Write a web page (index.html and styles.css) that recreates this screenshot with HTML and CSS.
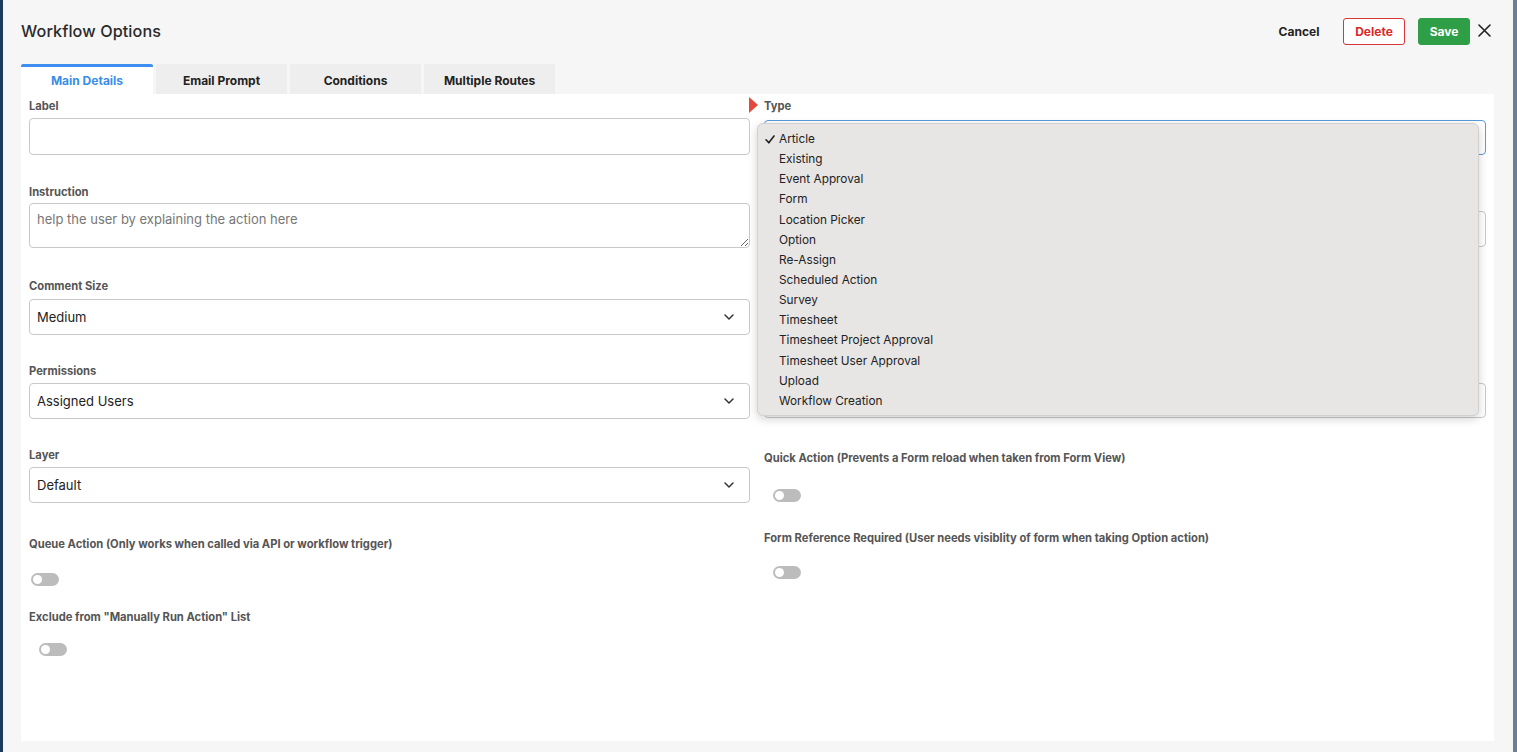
FILE: index.html
```html
<!DOCTYPE html>
<html lang="en">
<head>
<meta charset="utf-8">
<title>Workflow Options</title>
<link rel="stylesheet" href="styles.css">
</head>
<body>
<div class="screen">
  <div class="edge edge-left"></div>
  <div class="modal">
    <header class="modal-head">
      <h1 class="title">Workflow Options</h1>
      <div class="actions">
        <button class="btn btn-cancel">Cancel</button>
        <button class="btn btn-delete">Delete</button>
        <button class="btn btn-save">Save</button>
        <button class="btn-close" aria-label="Close">
          <svg width="13" height="13" viewBox="0 0 13 13"><path d="M1 1L12 12M12 1L1 12" stroke="#222" stroke-width="1.6" stroke-linecap="round"/></svg>
        </button>
      </div>
    </header>
    <nav class="tabs">
      <div class="tab tab-active">Main Details</div>
      <div class="tab">Email Prompt</div>
      <div class="tab">Conditions</div>
      <div class="tab">Multiple Routes</div>
    </nav>
    <section class="panel">
      <div class="col col-left">
        <div class="field f-label">
          <label class="lbl">Label</label>
          <div class="input"></div>
        </div>
        <div class="field f-instruction">
          <label class="lbl">Instruction</label>
          <textarea class="textarea" placeholder="help the user by explaining the action here"></textarea>
        </div>
        <div class="field f-comment">
          <label class="lbl">Comment Size</label>
          <div class="select"><span>Medium</span><svg class="chev" width="10" height="6" viewBox="0 0 10 6"><path d="M1 1L5 5L9 1" fill="none" stroke="#333" stroke-width="1.5" stroke-linecap="round" stroke-linejoin="round"/></svg></div>
        </div>
        <div class="field">
          <label class="lbl">Permissions</label>
          <div class="select"><span>Assigned Users</span><svg class="chev" width="10" height="6" viewBox="0 0 10 6"><path d="M1 1L5 5L9 1" fill="none" stroke="#333" stroke-width="1.5" stroke-linecap="round" stroke-linejoin="round"/></svg></div>
        </div>
        <div class="field">
          <label class="lbl">Layer</label>
          <div class="select"><span>Default</span><svg class="chev" width="10" height="6" viewBox="0 0 10 6"><path d="M1 1L5 5L9 1" fill="none" stroke="#333" stroke-width="1.5" stroke-linecap="round" stroke-linejoin="round"/></svg></div>
        </div>
        <div class="field f-queue">
          <label class="lbl">Queue Action (Only works when called via API or workflow trigger)</label>
          <div class="toggle t-queue"><span class="knob"></span></div>
        </div>
        <div class="field f-exclude">
          <label class="lbl">Exclude from "Manually Run Action" List</label>
          <div class="toggle t-exclude"><span class="knob"></span></div>
        </div>
      </div>

      <div class="col col-right">
        <span class="marker"></span>
        <div class="field f-type">
          <label class="lbl">Type</label>
          <div class="select select-focus"></div>
        </div>
        <div class="box box-a"></div>
        <div class="box box-b"></div>
        <div class="field f-quick">
          <label class="lbl">Quick Action (Prevents a Form reload when taken from Form View)</label>
          <div class="toggle t-right"><span class="knob"></span></div>
        </div>
        <div class="field f-formref">
          <label class="lbl">Form Reference Required (User needs visiblity of form when taking Option action)</label>
          <div class="toggle t-right t-formref"><span class="knob"></span></div>
        </div>

        <ul class="menu">
          <li class="item item-checked"><svg class="check" width="10" height="9" viewBox="0 0 10 9"><path d="M1 4.8L3.8 7.8L9 1" fill="none" stroke="#222" stroke-width="1.6" stroke-linecap="round" stroke-linejoin="round"/></svg>Article</li>
          <li class="item">Existing</li>
          <li class="item">Event Approval</li>
          <li class="item">Form</li>
          <li class="item">Location Picker</li>
          <li class="item">Option</li>
          <li class="item">Re-Assign</li>
          <li class="item">Scheduled Action</li>
          <li class="item">Survey</li>
          <li class="item">Timesheet</li>
          <li class="item">Timesheet Project Approval</li>
          <li class="item">Timesheet User Approval</li>
          <li class="item">Upload</li>
          <li class="item">Workflow Creation</li>
        </ul>
      </div>
    </section>
  </div>
  <div class="edge edge-right"></div>
</div>
</body>
</html>
```

FILE: styles.css
```css
* { box-sizing: border-box; }

html, body {
  margin: 0;
  padding: 0;
  height: 100%;
  overflow: hidden;
}

body {
  font-family: Inter, "Noto Sans", "Liberation Sans", sans-serif;
  color: #222;
  background: #2a4766;
}

.screen {
  display: flex;
  height: 752px;
}

.edge { flex: none; }
.edge-left { width: 3px; background: #1e3a5a; }
.edge-right { width: 4px; background: #6a8099; }

.modal {
  flex: 1;
  background: #f6f6f6;
  padding: 0 19px 11px 18px;
  display: flex;
  flex-direction: column;
}

/* header */
.modal-head {
  height: 61px;
  display: flex;
  align-items: center;
  justify-content: space-between;
  padding-top: 1px;
}

.title {
  margin: 0;
  font-size: 16.2px;
  font-weight: 500;
  color: #2a2a2a;
  letter-spacing: 0.1px;
}

.actions {
  display: flex;
  align-items: center;
  margin-right: 3px;
}

.btn {
  font-family: inherit;
  font-size: 12px;
  font-weight: 700;
  height: 27px;
  border-radius: 3px;
  cursor: pointer;
  padding: 0;
}

.btn-cancel {
  background: transparent;
  border: none;
  color: #222;
  width: 42px;
  margin-right: 23px;
}

.btn-delete {
  width: 62px;
  background: #fff;
  border: 1px solid #d8363a;
  color: #d8282c;
  margin-right: 13px;
}

.btn-save {
  width: 52px;
  background: #2e9f46;
  border: 1px solid #2e9f46;
  color: #fff;
  margin-right: 8px;
}

.btn-close {
  background: none;
  border: none;
  padding: 0;
  width: 13px;
  height: 13px;
  display: flex;
  margin-top: -2px;
}

/* tabs */
.tabs {
  display: flex;
  gap: 3px;
  height: 30px;
  margin-top: 3px;
}

.tab {
  width: 131px;
  background: #eeeeee;
  font-size: 12px;
  font-weight: 700;
  color: #222;
  display: flex;
  align-items: center;
  justify-content: center;
  padding-top: 2px;
}

.tab-active {
  width: 132px;
  background: #fff;
  color: #3a8ee8;
  border-top: 3px solid #3d8ef0;
  border-radius: 2px 2px 0 0;
  padding-top: 0;
}

/* panel */
.panel {
  flex: 1;
  background: #fff;
  display: grid;
  grid-template-columns: 721px 722px;
  column-gap: 14px;
  padding: 0 8px;
  align-content: start;
}

.col {
  display: flex;
  flex-direction: column;
  position: relative;
}

.field {
  display: flex;
  flex-direction: column;
  margin-top: 29px;
}

.lbl {
  display: block;
  font-size: 11.2px;
  line-height: 14px;
  font-weight: 700;
  color: #555;
  margin-bottom: 5px;
}

.input {
  height: 37px;
  border: 1px solid #c9c9c9;
  border-radius: 4px;
  background: #fff;
}

.textarea {
  height: 45px;
  border: 1px solid #c9c9c9;
  border-radius: 4px;
  font-family: inherit;
  font-size: 13px;
  padding: 7px 7px;
  color: #222;
  resize: vertical;
  outline: none;
}

.textarea::placeholder { color: #777; }

.select {
  height: 36px;
  border: 1px solid #c9c9c9;
  border-radius: 4px;
  display: flex;
  align-items: center;
  justify-content: space-between;
  padding: 0 15px 0 7px;
  font-size: 13px;
  color: #222;
}

.chev { flex: none; }

.f-label { margin-top: 5px; }
.f-label .lbl { margin-bottom: 5px; }
.f-instruction { margin-top: 30px; }
.f-instruction .lbl { margin-bottom: 4px; }
.f-comment { margin-top: 31px; }
.f-comment .lbl { margin-bottom: 6px; }
.f-queue { margin-top: 34px; }
.f-queue .lbl { margin-bottom: 22px; }
.f-exclude { margin-top: 24px; }
.f-exclude .lbl { margin-bottom: 19px; }

/* toggles */
.toggle {
  width: 28px;
  height: 13px;
  border-radius: 7px;
  background: #bcbcbc;
  position: relative;
}

.knob {
  position: absolute;
  left: 2px;
  top: 2px;
  width: 9px;
  height: 9px;
  border-radius: 50%;
  background: #fff;
}

.t-queue { margin-left: 2px; }
.t-exclude { margin-left: 10px; }
.t-right { margin-left: 9px; }

/* right column */
.f-type { margin-top: 5px; }
.f-type .lbl { margin-bottom: 7px; }

.select-focus {
  height: 35px;
  border: 1px solid #5b9bd8;
}

.box {
  border: 1px solid #c9c9c9;
  border-radius: 4px;
  height: 36px;
}

.box-a { margin-top: 56px; }
.box-b { margin-top: 136px; height: 35px; }

.f-quick { margin-top: 33px; }
.f-quick .lbl { margin-bottom: 24px; }
.f-formref { margin-top: 29px; }
.f-formref .lbl { margin-bottom: 21px; }

.marker {
  position: absolute;
  left: -15px;
  top: 3px;
  width: 0;
  height: 0;
  border-top: 8.5px solid transparent;
  border-bottom: 8.5px solid transparent;
  border-left: 9px solid #e4483a;
}

/* dropdown menu overlay */
.menu {
  position: absolute;
  left: -7px;
  top: 29px;
  width: 722px;
  margin: 0;
  padding: 5px 0 4px;
  list-style: none;
  background: #e7e6e5;
  border: 1px solid #d2d1d0;
  border-radius: 6px;
  box-shadow: 0 3px 10px rgba(0, 0, 0, 0.18);
  z-index: 5;
}

.item {
  height: 20.15px;
  line-height: 20px;
  font-size: 11.8px;
  color: #222;
  padding-left: 21px;
  position: relative;
}

.check {
  position: absolute;
  left: 7px;
  top: 6px;
}
```
